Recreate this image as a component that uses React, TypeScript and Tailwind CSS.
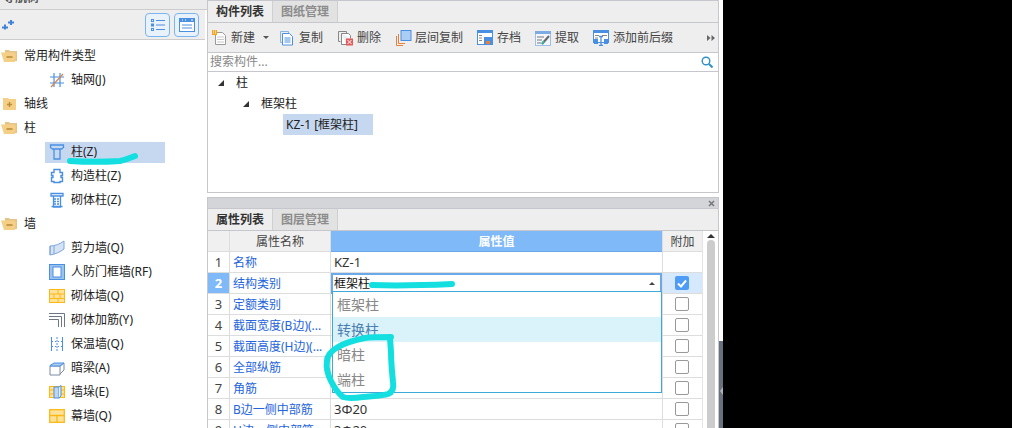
import React from "react";

const B = "#4a90e2";
const Y = "#fdb813";

function Folder({ plus }: { plus?: boolean }) {
  return (
    <svg width="17" height="14" viewBox="0 0 17 14" className="shrink-0">
      {plus ? (
        <>
          <path d="M2 1h5l1 1h7v11H2z" fill="#f5cf85" />
          <path d="M6 7.500h5M8.500 5v5" stroke="#b98d3a" strokeWidth="1.400" />
        </>
      ) : (
        <>
          <path d="M4 1h4l1 1h7v10H4z" fill="#e3c489" />
          <path d="M0 3.500h13l2 1.500-1 8H3z" fill="#f5cf85" />
          <path d="M5.500 8h6" stroke="#b98d3a" strokeWidth="1.600" />
        </>
      )}
    </svg>
  );
}

function TreeIcon({ name }: { name: string }) {
  const common = { width: 16, height: 16, viewBox: "0 0 16 16", className: "shrink-0" };
  switch (name) {
    case "grid":
      return (
        <svg {...common} fill="none" stroke={B} strokeWidth="1.200">
          <path d="M5 1v14M11 1v14M1 5h14M1 11h14" />
          <path d="M2 15 14 2" stroke="#d9824a" />
        </svg>
      );
    case "col":
      return (
        <svg {...common} fill="none" stroke={B} strokeWidth="1.300">
          <path d="M1.500 1h13v2.500l-2 1.500h-9l-2-1.500zM5 5h6v10H5z" />
        </svg>
      );
    case "cons":
      return (
        <svg {...common} fill="none" stroke={B} strokeWidth="1.400">
          <path d="M5 1.500h6v3h2.500v3H12v2h1.500v4H11v1H5v-1H2.500v-4H4v-2H2.500v-3H5z" />
        </svg>
      );
    case "brickcol":
      return (
        <svg {...common} fill="none" stroke={B} strokeWidth="1.300">
          <path d="M2 1.500h12V4H2zM4.500 4h7v11h-7zM2.500 14.500h11" />
          <path d="M5 7h6M5 9.500h6M5 12h6" strokeDasharray="2 1" />
        </svg>
      );
    case "shear":
      return (
        <svg {...common} fill="none" stroke="#7ea6d8">
          <path d="M1 6c5 0 10-2 14-5v8c-4 3-8 5-14 6z" fill="#d5e3f5" />
          <path d="M1 6v9M5 6v8" />
        </svg>
      );
    case "door":
      return (
        <svg {...common}>
          <rect x="0.500" y="0.500" width="15" height="15" fill="#9cc2ee" stroke={B} />
          <rect x="4" y="3" width="8" height="10" fill="#fff" stroke={B} />
        </svg>
      );
    case "brick":
      return (
        <svg {...common} fill="#fde29c" stroke={Y}>
          <rect x="0.500" y="1.500" width="15" height="13" />
          <path d="M0.500 6h15M0.500 10.500h15M9 1.500V6M5 6v4.500M11 6v4.500M9 10.500v4" fill="none" />
        </svg>
      );
    case "rebar":
      return (
        <svg {...common} fill="none" stroke="#6f7780">
          <path d="M0 1.500h15.500V15M0 4.500h12.500V15M0 7.500h9.500V15" />
        </svg>
      );
    case "insul":
      return (
        <svg {...common} fill="none" stroke={B} strokeDasharray="2 1">
          <path d="M2.500 1v14M13.500 1v14" strokeDasharray="none" />
          <path d="M8 1v14" />
          <path d="M3 5.500h10M3 10.500h10" strokeDasharray="1 2" />
        </svg>
      );
    case "beam":
      return (
        <svg {...common} fill="none" stroke="#7a8aa0">
          <path d="M1 6h10v9H1zM11 6l4-3v7l-4 4" fill="#fff" />
          <path d="M1 5.500 5 3h10l-4 3H1z" fill="#a9c9ef" stroke={B} />
        </svg>
      );
    case "pier":
      return (
        <svg {...common} fill="#fde29c" stroke={Y}>
          <rect x="0.500" y="2.500" width="15" height="11" />
          <path d="M0.500 6h15M0.500 10h15" fill="none" />
          <rect x="5" y="3" width="5" height="11" fill="#bcd6f4" stroke={B} />
          <path d="M10 3l2-1.500V12l-2 2" fill="#e6f0fb" stroke={B} />
        </svg>
      );
    default:
      return (
        <svg {...common} fill="#fde29c" stroke={Y} strokeWidth="1.300">
          <rect x="0.700" y="1.700" width="14.600" height="12.600" />
          <path d="M0.700 7.500h14.600M8 7.500v6.800" fill="none" />
        </svg>
      );
  }
}

type Node = { label: string; icon?: string; folder?: "open" | "plus"; selected?: boolean };
const nodes: Node[] = [
  { label: "常用构件类型", folder: "open" },
  { label: "轴网(J)", icon: "grid" },
  { label: "轴线", folder: "plus" },
  { label: "柱", folder: "open" },
  { label: "柱(Z)", icon: "col", selected: true },
  { label: "构造柱(Z)", icon: "cons" },
  { label: "砌体柱(Z)", icon: "brickcol" },
  { label: "墙", folder: "open" },
  { label: "剪力墙(Q)", icon: "shear" },
  { label: "人防门框墙(RF)", icon: "door" },
  { label: "砌体墙(Q)", icon: "brick" },
  { label: "砌体加筋(Y)", icon: "rebar" },
  { label: "保温墙(Q)", icon: "insul" },
  { label: "暗梁(A)", icon: "beam" },
  { label: "墙垛(E)", icon: "pier" },
  { label: "幕墙(Q)", icon: "curtain" },
];

function Tabs({ a, b }: { a: string; b: string }) {
  return (
    <div className="flex h-[21px] shrink-0 bg-[#eeeeee] border-b border-[#c5c7cc] box-content">
      <div className="w-[64px] flex items-center justify-center font-bold text-[#333]">{a}</div>
      <div className="w-[66px] flex items-center justify-center bg-[#e2e2e2] border-x border-[#d0d0d0] text-[#8c8c8c] font-bold">{b}</div>
    </div>
  );
}

function ToolIcon({ name }: { name: string }) {
  const common = { width: 16, height: 16, viewBox: "0 0 16 16", className: "shrink-0" };
  switch (name) {
    case "new":
      return (
        <svg {...common} fill="none">
          <path d="M3.500 2.500h7l3 3v9h-10z" fill="#fff" stroke="#9a9a9a" />
          <path d="M5 7h7M5 9.500h7M5 12h7" stroke="#c9c9c9" />
          <rect x="0" y="0" width="5" height="5" fill="#f7a21b" />
          <path d="M1 1h1M3 3h1M3 1h1M1 3h1" stroke="#fff" />
        </svg>
      );
    case "copy":
      return (
        <svg {...common} fill="none" stroke={B}>
          <path d="M0.500 1.500h8v2M0.500 1.500v11h2" stroke="#8ab4e6" />
          <path d="M2.500 3.500h7l3 3v8.500h-10z" fill="#fff" />
          <path d="M4.500 8h6M4.500 10h6M4.500 12h6" />
        </svg>
      );
    case "del":
      return (
        <svg {...common} fill="none" stroke="#888">
          <path d="M0.500 1.500h8v2M0.500 1.500v10h2" />
          <path d="M3.500 3.500h7l2 2v3M8 14.500H3.500v-11" fill="#fff" />
          <rect x="8" y="8.500" width="7" height="7" fill="#e15b5b" stroke="none" />
          <path d="m9.500 10 4 4m0-4-4 4" stroke="#fff" />
        </svg>
      );
    case "floor":
      return (
        <svg {...common} fill="none">
          <path d="M0.500 6v9.500H7M2.500 4v9.500H9" stroke="#e8813a" />
          <rect x="5" y="0.500" width="10" height="10" fill="#a9cdf5" stroke={B} />
        </svg>
      );
    case "save":
      return (
        <svg {...common} fill="none">
          <rect x="0.500" y="0.500" width="15" height="14" fill="#fff" stroke={B} />
          <rect x="0" y="0" width="16" height="3" fill={B} />
          <path d="M2 5.500h3M2 8h3M2 10.500h3" stroke="#8a8a8a" />
          <rect x="7" y="7" width="8" height="8" fill={B} />
          <rect x="9" y="11" width="4" height="3" fill="#e8813a" />
        </svg>
      );
    case "extract":
      return (
        <svg {...common} fill="none">
          <rect x="0.500" y="1.500" width="15" height="14" fill="#f2f6fb" stroke="#9dbfe8" />
          <rect x="0" y="1" width="16" height="3" fill="#7fabe3" />
          <path d="M2 7h7M2 10h5M2 13h4" stroke="#777" />
          <path d="m7 14 7-8" stroke="#666" strokeWidth="2" />
          <path d="m7 14 2-3" stroke="#35b5a5" strokeWidth="2" />
        </svg>
      );
    default:
      return (
        <svg {...common} fill="none">
          <rect x="0.500" y="0.500" width="15" height="12" fill="#fff" stroke={B} />
          <rect x="0" y="0" width="16" height="3" fill={B} />
          <path d="M2 5.500h4M9 5.500h5M2 8h3" stroke="#8a8a8a" />
          <rect x="1" y="9" width="4" height="5" fill={B} />
          <rect x="11" y="9" width="4" height="5" fill={B} />
          <path d="M6 6.500h4M8 6.500v9M6 15.500h4" stroke={B} strokeWidth="1.300" />
        </svg>
      );
  }
}

const tools = [
  { icon: "new", label: "新建", caret: true, box: "w-[15px]", item: "" },
  { icon: "copy", label: "复制", box: "w-[14px]", item: "mr-[1px]" },
  { icon: "del", label: "删除", box: "w-[15px]", item: "mr-[1px]" },
  { icon: "floor", label: "层间复制", box: "w-[15px]", item: "" },
  { icon: "save", label: "存档", box: "w-[16px]", item: "" },
  { icon: "extract", label: "提取", box: "w-[16px]", item: "" },
  { icon: "fix", label: "添加前后缀", box: "w-[16px]", item: "" },
];

const rows = [
  { n: 1, name: "名称", value: "KZ-1", noBox: true },
  { n: 2, name: "结构类别", value: "框架柱", active: true, box: true },
  { n: 3, name: "定额类别", value: "" },
  { n: 4, name: "截面宽度(B边)(...", value: "" },
  { n: 5, name: "截面高度(H边)(...", value: "" },
  { n: 6, name: "全部纵筋", value: "" },
  { n: 7, name: "角筋", value: "" },
  { n: 8, name: "B边一侧中部筋", value: "3Φ20" },
  { n: 9, name: "H边一侧中部筋", value: "3Φ20" },
] as { n: number; name: string; value: string; active?: boolean; box?: boolean; noBox?: boolean }[];

export default function App() {
  return (
    <div lang="zh-CN" className="relative w-[1012px] h-[428px] overflow-hidden flex bg-black text-[12px] leading-none text-[#333] font-['Noto_Sans','Noto_Sans_CJK_SC',sans-serif]">
      {/* left navigation */}
      <aside className="w-[207px] shrink-0 bg-white flex flex-col">
        <div className="h-[9px] shrink-0 overflow-hidden bg-[#ebebeb] border-b border-[#cccccc] box-content">
          <div className="mt-[-9px] pl-[3px] h-[14px] font-bold text-[#555] leading-[14px]">导航树</div>
        </div>
        <div className="h-[29px] shrink-0 bg-[#eeeeee] border-b border-[#cccccc] box-content flex items-center pl-[2px] pr-[6px] mr-[2px]">
          <svg width="12" height="10" viewBox="0 0 12 10" fill="none" stroke="#3f82d6" strokeWidth="2" className="mt-[1px]">
            <path d="M0 7.500h6M3 4.500v5M6 2.500h6M9 0v5" />
          </svg>
          <div className="ml-auto flex gap-[4px]">
            <button className="w-[25px] h-[24px] rounded-[4px] border border-[#7ab6ee] bg-[#e9f1fa] flex items-center justify-center">
              <svg width="14" height="14" viewBox="0 0 14 14" fill="none" stroke="#4a90e2">
                <rect x="0.500" y="1.500" width="2" height="2" />
                <rect x="0.500" y="6" width="2" height="2" />
                <rect x="0.500" y="10.500" width="2" height="2" />
                <path d="M5 2.500h9M5 7h9M5 11.500h9" />
              </svg>
            </button>
            <button className="w-[25px] h-[24px] rounded-[4px] border border-[#7ab6ee] bg-[#e9f1fa] flex items-center justify-center">
              <svg width="16" height="14" viewBox="0 0 16 14" fill="none">
                <rect x="0.500" y="0.500" width="15" height="13" fill="#fff" stroke="#4a90e2" />
                <rect x="0" y="0" width="16" height="4" fill="#4a90e2" />
                <path d="M3 2h1M6 2h1M12 2h2" stroke="#fff" />
                <path d="M3 7h10M3 10h10" stroke="#4a90e2" />
              </svg>
            </button>
          </div>
        </div>
        <div className="pt-[4px] pr-[2px]">
          {nodes.map((n) =>
            n.folder ? (
              <div key={n.label} className="h-[24px] flex items-center pl-[1px] gap-[6px] text-[#222]">
                <Folder plus={n.folder === "plus"} />
                <span>{n.label}</span>
              </div>
            ) : (
              <div key={n.label} className="h-[24px] flex items-center pl-[45px]">
                <div className={`w-[120px] h-[21px] flex items-center gap-[6px] pl-[4px] whitespace-nowrap text-[#222] ${n.selected ? "bg-[#c6d8f0]" : ""}`}>
                  <TreeIcon name={n.icon ?? ""} />
                  <span>{n.label}</span>
                </div>
              </div>
            )
          )}
        </div>
      </aside>

      {/* right column */}
      <main className="w-[512px] shrink-0 bg-white flex flex-col">
        <section className="h-[193px] shrink-0 flex flex-col border border-[#c5c7cc]">
          <Tabs a="构件列表" b="图纸管理" />
          <div className="h-[29px] shrink-0 box-content bg-[#eeeeee] border-b border-[#c5c7cc] flex items-center pl-[4px] gap-[14px] text-[#444]">
            {tools.map((t) => (
              <div key={t.label} className={`flex items-center gap-[4px] ${t.item}`}>
                <span className={`${t.box} flex justify-center`}>
                  <ToolIcon name={t.icon} />
                </span>
                <span>{t.label}</span>
                {t.caret && <span className="ml-[4px] mr-[-2px] w-0 h-0 border-x-[3px] border-x-transparent border-t-[3px] border-t-[#555]" />}
              </div>
            ))}
            <svg width="8" height="6" viewBox="0 0 8 6" fill="#666" className="ml-auto mr-[3px]">
              <path d="M0 0l3.500 3L0 6zM4.500 0 8 3 4.500 6z" />
            </svg>
          </div>
          <div className="h-[18px] shrink-0 box-content border-b border-[#c5c7cc] flex items-center pl-[2px] pr-[5px] text-[#888]">
            <span>搜索构件...</span>
            <svg width="12" height="12" viewBox="0 0 12 12" fill="none" stroke="#2f8fc8" strokeWidth="1.400" className="ml-auto">
              <circle cx="5" cy="5" r="3.800" />
              <path d="m8 8 3.500 3.500" strokeWidth="2" />
            </svg>
          </div>
          <div className="text-[#222]">
            <div className="h-[21px] flex items-center pl-[10px]">
              <span className="w-0 h-0 border-l-[6px] border-l-transparent border-b-[6px] border-b-[#333]" />
              <span className="ml-[12px]">柱</span>
            </div>
            <div className="h-[21px] flex items-center pl-[35px]">
              <span className="w-0 h-0 border-l-[6px] border-l-transparent border-b-[6px] border-b-[#333]" />
              <span className="ml-[12px]">框架柱</span>
            </div>
            <div className="h-[21px] flex items-center pl-[75px]">
              <span className="h-[21px] w-[90px] pl-[3px] flex items-center bg-[#c6d8f0]">KZ-1 [框架柱]</span>
            </div>
          </div>
        </section>

        <section className="mt-[4px] flex-1 min-h-0 flex flex-col border-x border-t border-[#c5c7cc]">
          <div className="h-[10px] shrink-0 box-content bg-[#d4d5d9] border-b border-[#c5c7cc] flex items-center justify-end pr-[3px]">
            <svg width="7" height="7" viewBox="0 0 7 7" stroke="#777" strokeWidth="1.500"><path d="m1 1 5 5m0-5-5 5" /></svg>
          </div>
          <Tabs a="属性列表" b="图层管理" />
          <div className="flex flex-1 min-h-0">
            <div className="w-[494px] shrink-0">
              <div className="flex h-[21px] text-[#444]">
                <div className="w-[22px] bg-[#f0f0f0] border-r border-b border-[#dddddd]" />
                <div className="w-[101px] pt-[1px] bg-[#f0f0f0] border-r border-b border-[#dddddd] flex items-center justify-center">属性名称</div>
                <div className="w-[331px] pt-[1px] bg-[#7fb9f8] border-b border-[#6aa9ea] text-white font-bold text-[12px] flex items-center justify-center">属性值</div>
                <div className="w-[40px] pt-[1px] bg-[#f0f0f0] border-l border-b border-[#dddddd] flex items-center justify-center">附加</div>
              </div>
              {rows.map((r) => (
                <div key={r.n} className="flex h-[21px]">
                  <div className={`w-[22px] pt-[1px] border-r border-b border-[#dddddd] flex items-center justify-center text-[13px] ${r.active ? "bg-[#7fb9f8] text-white font-bold" : "text-[#444]"}`}>{r.n}</div>
                  <div className="w-[101px] pt-[1px] pl-[3px] border-r border-b border-[#dddddd] flex items-center text-[#2464dc] whitespace-nowrap overflow-hidden">{r.name}</div>
                  <div className={`w-[331px] flex items-center ${r.active ? "border-2 border-[#6aa9ea] border-b-[#3ea8d8] bg-white pl-[1px] pr-[4px] text-[#111]" : "pt-[1px] pl-[3px] border-b border-[#dddddd] text-[#333] text-[13px]"}`}>
                    <span>{r.value}</span>
                    {r.active && <span className="ml-auto mr-[1px] w-0 h-0 border-x-[3px] border-x-transparent border-b-[3px] border-b-[#444]" />}
                  </div>
                  <div className={`w-[40px] border-l border-b border-[#dddddd] flex items-center justify-center pr-[2px] ${r.active ? "bg-[#d5e8fc]" : ""}`}>
                    {r.box ? (
                      <span className="w-[14px] h-[14px] rounded-[2px] bg-[#4e9cf5] flex items-center justify-center">
                        <svg width="10" height="9" viewBox="0 0 10 9" fill="none" stroke="#fff" strokeWidth="2"><path d="m1 4.500 3 3 5-6" /></svg>
                      </span>
                    ) : r.noBox ? null : (
                      <span className="w-[14px] h-[14px] rounded-[2px] border-[1.500px] border-[#999] bg-white" />
                    )}
                  </div>
                </div>
              ))}
            </div>
            <div className="flex-1 flex flex-col items-center bg-white border-l border-[#e4e4e4]">
              <span className="mt-[3px] w-0 h-0 border-x-[4px] border-x-transparent border-b-[4px] border-b-[#333]" />
              <div className="mt-[2px] w-[8px] flex-1 rounded-t-[4px] bg-[#cccccc]" />
            </div>
          </div>
        </section>
      </main>

      {/* right edge strip */}
      <div className="w-[4px] shrink-0 flex flex-col bg-white">
        <div className="h-[341px] shrink-0" />
        <div className="flex-1 bg-[#68727c] flex items-center pl-[1px]">
          <span className="mt-[13px] w-0 h-0 border-y-[4px] border-y-transparent border-r-[3px] border-r-[#aeb4ba]" />
        </div>
      </div>

      {/* open dropdown list */}
      <div className="absolute left-[332px] top-[291px] w-[330px] h-[102px] border border-[#3ea8d8] bg-white text-[14px] text-[#888]">
        <div className="h-[25px] flex items-center pl-[4px]">框架柱</div>
        <div className="h-[25px] flex items-center pl-[4px] bg-[#daf2fa] text-[#4a7fb0]">转换柱</div>
        <div className="h-[25px] flex items-center pl-[4px]">暗柱</div>
        <div className="h-[25px] flex items-center pl-[4px]">端柱</div>
      </div>

      {/* hand-drawn annotations */}
      <svg className="absolute left-0 top-0 pointer-events-none" width="1012" height="428" fill="none" stroke="#14dfe0" strokeLinecap="round" strokeLinejoin="round">
        <path d="M70 161C85 162 105 162 120 161 126 160 130 158 135 156" strokeWidth="6" />
        <path d="M372 285C395 286 430 285 452 284" strokeWidth="6" />
        <path d="M391 337C380 337 372 337 365 338 355 340 345 343 338 347 331 351 327 355 327 361 326 367 327 373 331 381 335 389 339 394 343 397 349 399 356 398 363 397 372 396 382 396 388 394 393 392 394 388 393 382 392 372 391 362 391 352L390 338" strokeWidth="6" />
      </svg>
    </div>
  );
}
